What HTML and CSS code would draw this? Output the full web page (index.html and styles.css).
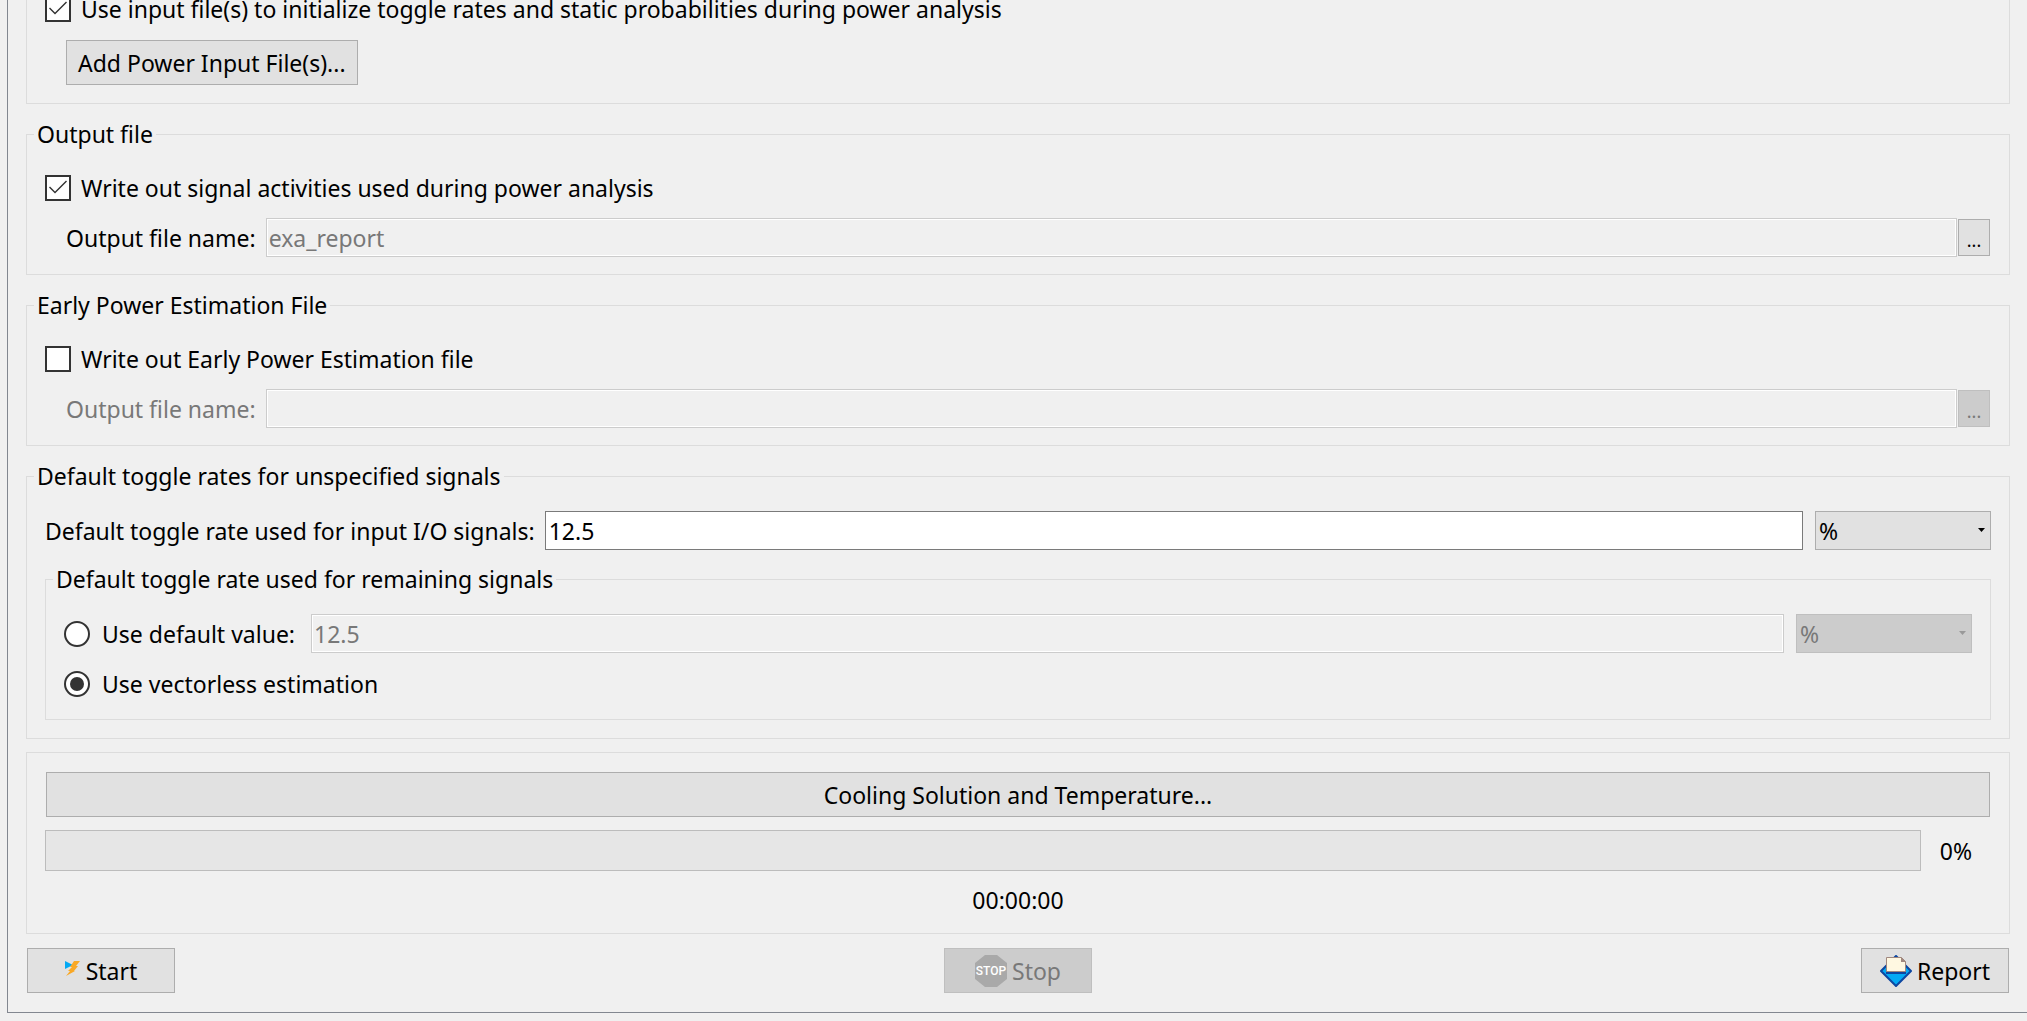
FILE: index.html
```
<!DOCTYPE html>
<html lang="en">

<head>
    <meta charset="UTF-8">
    <meta name="viewport" content="width=device-width, initial-scale=1.0">
    <title>Power Analyzer Tool</title>
    <link rel="stylesheet" href="styles.css">
</head>

<body>
    <form class="panel">
        <fieldset class="group group-input">
            <div class="row">
                <input type="checkbox" id="useInput" class="check" checked>
                <label for="useInput">Use input file(s) to initialize toggle rates and static probabilities during power analysis</label>
            </div>
            <div class="indent">
                <button type="button" class="btn">Add Power Input File(s)...</button>
            </div>
        </fieldset>

        <fieldset class="group">
            <legend>Output file</legend>
            <div class="row">
                <input type="checkbox" id="writeSignals" class="check" checked>
                <label for="writeSignals">Write out signal activities used during power analysis</label>
            </div>
            <div class="row indent">
                <label for="signalFile">Output file name:</label>
                <div class="file">
                    <input type="text" id="signalFile" class="field" value="exa_report" disabled>
                    <button type="button" class="btn btn-browse">...</button>
                </div>
            </div>
        </fieldset>

        <fieldset class="group">
            <legend>Early Power Estimation File</legend>
            <div class="row">
                <input type="checkbox" id="writeEpe" class="check">
                <label for="writeEpe">Write out Early Power Estimation file</label>
            </div>
            <div class="row indent">
                <label for="epeFile" class="disabled">Output file name:</label>
                <div class="file">
                    <input type="text" id="epeFile" class="field" disabled>
                    <button type="button" class="btn btn-browse" disabled>...</button>
                </div>
            </div>
        </fieldset>

        <fieldset class="group group-rates">
            <legend>Default toggle rates for unspecified signals</legend>
            <div class="row">
                <label for="ioRate">Default toggle rate used for input I/O signals:</label>
                <input type="text" id="ioRate" class="field" value="12.5">
                <div class="unit">
                    <select class="select" aria-label="Input rate unit">
                        <option>%</option>
                    </select>
                </div>
            </div>
            <fieldset class="group group-inner">
                <legend>Default toggle rate used for remaining signals</legend>
                <div class="row">
                    <input type="radio" name="remaining" id="useDefault" class="radio">
                    <label for="useDefault">Use default value:</label>
                    <input type="text" class="field" value="12.5" aria-label="Default value" disabled>
                    <div class="unit unit-disabled">
                        <select class="select" aria-label="Default value unit" disabled>
                            <option>%</option>
                        </select>
                    </div>
                </div>
                <div class="row">
                    <input type="radio" name="remaining" id="useVectorless" class="radio" checked>
                    <label for="useVectorless">Use vectorless estimation</label>
                </div>
            </fieldset>
        </fieldset>

        <div class="group group-run">
            <button type="button" class="btn btn-cooling">Cooling Solution and Temperature...</button>
            <div class="progress-row">
                <div class="progress" role="progressbar" aria-valuenow="0" aria-valuemin="0" aria-valuemax="100"></div>
                <span class="percent">0%</span>
            </div>
            <div class="time">00:00:00</div>
        </div>

        <div class="actions">
            <button type="button" class="btn btn-action">
                <svg class="icon-start" width="16" height="16" viewBox="0 0 16 16">
                    <path d="M0 0L8 4L0 8Z" fill="#03a9f4" />
                    <path d="M9 0H15L11 5H13L9 10H10L1 15L5 10H3L7 6H5Z" fill="#f9a825" />
                </svg>
                Start
            </button>
            <button type="button" class="btn btn-action" disabled>
                <svg width="32" height="32" viewBox="0 0 32 32">
                    <path d="M10 0H22L32 8V24L22 32H10L0 24V8Z" fill="#a9a9a9" />
                    <text x="16" y="20" class="stop-text">STOP</text>
                </svg>
                Stop
            </button>
            <button type="button" class="btn btn-action">
                <svg width="32" height="32" viewBox="0 0 32 32">
                    <path d="M16 1L31 16L16 31L1 16Z" fill="#03a9f4" stroke="#0d47a1" stroke-width="2" stroke-linejoin="round" />
                    <path d="M6 16H26V19H6Z" fill="#0d47a1" />
                    <path d="M6.500 2.500H21.500L25.500 6.500V16.500H6.500Z" fill="#fff8e1" stroke="#a1887f" />
                    <path d="M21 2L26 7H21Z" fill="#a1887f" />
                </svg>
                Report
            </button>
        </div>
    </form>
</body>

</html>
```

FILE: styles.css
```
* {
    box-sizing: border-box;
}

body {
    margin: 0;
    background-color: #f0f0f0;
    color: #000;
    font-family: "Noto Sans", sans-serif;
    font-size: 23px;
    line-height: 24px;
    overflow: hidden;
}

button,
input,
select {
    margin: 0;
    font: inherit;
    color: inherit;
}

/* The top of the panel is scrolled out of view */
.panel {
    margin: -11px 0 8px 7px;
    padding: 0 17px 19px 18px;
    border-left: 1px solid #828790;
    border-bottom: 1px solid #828790;
}

.group {
    display: block;
    min-width: 0;
    margin: 18px 0 0;
    padding: 22px 18px 17px;
    border: 1px solid #dcdcdc;
}

.group legend {
    margin-left: -11px;
    padding: 0 3px;
}

.group-input {
    margin-top: 0;
    padding-top: 0;
    padding-bottom: 18px;
    border-top: none;
}

.group-input .row {
    margin-bottom: 12px;
}

.group-rates {
    padding-top: 23px;
    padding-bottom: 18px;
}

.group-inner {
    margin-top: 17px;
    padding-top: 23px;
    padding-bottom: 16px;
}

.group-run {
    display: flex;
    flex-direction: column;
    gap: 13px;
    margin-top: 13px;
    padding-top: 19px;
}

.row {
    display: flex;
    align-items: center;
    gap: 10px;
    min-height: 39px;
}

.row + .row {
    margin-top: 11px;
}

.indent {
    padding-left: 21px;
}

.disabled {
    color: #787878;
}

.file {
    display: flex;
    flex: 1;
    align-items: center;
    gap: 1px;
    margin-right: 1px;
}

.field {
    flex: 1;
    min-width: 0;
    height: 39px;
    padding: 0 3px;
    border: 1px solid #7a7a7a;
    border-radius: 0;
    background-color: #fff;
}

.field:disabled {
    padding: 0 2px;
    border-color: #ccc;
    outline: 1px solid #fff;
    outline-offset: -2px;
    background-color: #f0f0f0;
    color: #787878;
}

.btn {
    display: inline-flex;
    align-items: center;
    justify-content: center;
    height: 45px;
    padding: 0 11px;
    border: 1px solid #adadad;
    border-radius: 0;
    background-color: #e1e1e1;
}

.btn:disabled {
    border-color: #bfbfbf;
    background-color: #ccc;
    color: #787878;
}

.btn-browse {
    width: 32px;
    height: 37px;
    padding: 4px 0 0;
    font-size: 18px;
}

.btn-cooling {
    margin: 0 1px;
}

.check,
.radio {
    display: grid;
    place-items: center;
    flex: none;
    appearance: none;
    width: 26px;
    height: 26px;
    border: 2px solid #333;
    background-color: #fff;
}

.radio {
    margin-right: 2px;
    border-radius: 50%;
}

.radio + label {
    padding-right: 6px;
}

.check:checked::before {
    content: "";
    width: 22px;
    height: 22px;
    background-color: #333;
    clip-path: polygon(2px 11px, 3px 10px, 8px 15px, 19px 4px, 20px 5px, 8px 17px);
}

.radio:checked::before {
    content: "";
    width: 14px;
    height: 14px;
    border-radius: 50%;
    background-color: #333;
}

.unit {
    position: relative;
    width: 176px;
    margin-left: 2px;
}

.unit::after {
    content: "";
    position: absolute;
    right: 6px;
    top: 17px;
    width: 7px;
    height: 4px;
    background-color: #000;
    clip-path: polygon(0 0, 100% 0, 50% 100%);
    pointer-events: none;
}

.unit-disabled::after {
    background-color: #999;
}

.select {
    display: block;
    appearance: none;
    width: 100%;
    height: 39px;
    padding: 0 3px;
    border: 1px solid #adadad;
    border-radius: 0;
    background-color: #e1e1e1;
}

.select:disabled {
    border-color: #bfbfbf;
    background-color: #ccc;
    color: #787878;
    opacity: 1;
}

.progress-row {
    display: flex;
    align-items: center;
}

.progress {
    flex: 1;
    height: 41px;
    border: 1px solid #bcbcbc;
    background-color: #e6e6e6;
}

.percent {
    width: 70px;
    text-align: center;
}

.time {
    line-height: 32px;
    text-align: center;
}

.actions {
    display: flex;
    justify-content: space-between;
    margin: 14px 1px 0;
}

.btn-action {
    gap: 5px;
    width: 148px;
    padding: 0;
}

.icon-start {
    margin-bottom: 4px;
}

.stop-text {
    font-family: Roboto, sans-serif;
    font-size: 12px;
    font-weight: 500;
    fill: #fff;
    text-anchor: middle;
}
```
